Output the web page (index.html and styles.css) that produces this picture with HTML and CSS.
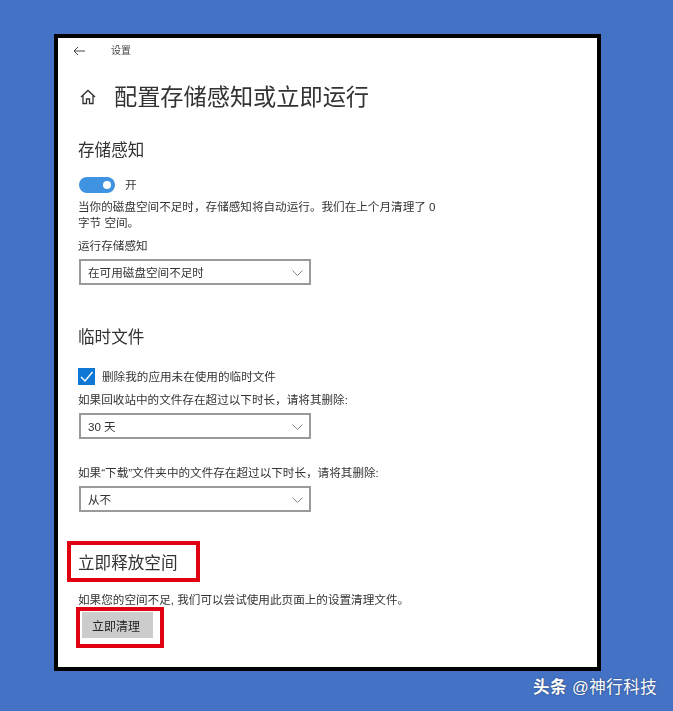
FILE: index.html
```html
<!DOCTYPE html>
<html lang="zh-CN">
<head>
  <meta charset="UTF-8" />
  <meta name="viewport" content="width=device-width, initial-scale=1.0"/>
  <title>设置</title>
  <link rel="stylesheet" href="styles.css">
</head>
<body>
  <div class="window">

    <!-- Title bar -->
    <div class="titlebar">
      <svg class="back" width="12" height="10" viewBox="0 0 12 10" fill="none" stroke="#444" stroke-width="1">
        <path d="M12 5H1M5 1L1 5l4 4"/>
      </svg>
      <span class="app-name">设置</span>
    </div>

    <div class="page-title">
      <svg class="home" width="16" height="16" viewBox="0 0 16 16" fill="none" stroke="#333" stroke-width="1.3">
        <path d="M1 8l7-6.5L15 8M3 6.5V14.5H6.5V10H9.5V14.5H13V6.5"/>
      </svg>
      <h1>配置存储感知或立即运行</h1>
    </div>

    <!-- Storage sense -->
    <h2 class="first">存储感知</h2>
    <div class="toggle-row">
      <span class="toggle"><span class="knob"></span></span>
      <span>开</span>
    </div>
    <p class="desc">当你的磁盘空间不足时，存储感知将自动运行。我们在上个月清理了 0<br>字节 空间。</p>
    <p class="field-label run-label">运行存储感知</p>
    <div class="select">
      <span>在可用磁盘空间不足时</span>
      <svg class="chevron" width="11" height="6" viewBox="0 0 11 6" fill="none" stroke="#888" stroke-width="1"><path d="M.5.5l5 5 5-5"/></svg>
    </div>

    <!-- Temp files -->
    <h2 class="temp">临时文件</h2>
    <div class="check-row">
      <span class="checkbox">
        <svg width="17" height="17" viewBox="0 0 17 17" fill="none" stroke="#fff" stroke-width="1.4"><path d="M3 9l4 4 7.5-9"/></svg>
      </span>
      <span>删除我的应用未在使用的临时文件</span>
    </div>
    <p class="field-label recycle-label">如果回收站中的文件存在超过以下时长，请将其删除:</p>
    <div class="select">
      <span>30 天</span>
      <svg class="chevron" width="11" height="6" viewBox="0 0 11 6" fill="none" stroke="#888" stroke-width="1"><path d="M.5.5l5 5 5-5"/></svg>
    </div>
    <p class="field-label download-label">如果“下载”文件夹中的文件存在超过以下时长，请将其删除:</p>
    <div class="select">
      <span>从不</span>
      <svg class="chevron" width="11" height="6" viewBox="0 0 11 6" fill="none" stroke="#888" stroke-width="1"><path d="M.5.5l5 5 5-5"/></svg>
    </div>

    <!-- Free up space -->
    <h2 class="free">立即释放空间<span class="mark mark-title"></span></h2>
    <p class="desc free-desc">如果您的空间不足, 我们可以尝试使用此页面上的设置清理文件。</p>
    <button class="clean">立即清理<span class="mark mark-button"></span></button>

  </div>

  <div class="watermark"><strong>头条</strong> @神行科技</div>
</body>
</html>
```

FILE: styles.css
```css
* {
  margin: 0;
  padding: 0;
  box-sizing: border-box;
  font-family: "Liberation Sans", "Noto Sans CJK SC", sans-serif;
}

body {
  background: #4472c4;
  height: 711px;
  overflow: hidden;
  color: #333;
  padding: 34px 0 0 54px;
}

.window {
  width: 547px;
  height: 637px;
  background: #fff;
  border: 4px solid #000;
  padding: 0 20px;
  font-size: 11.6px;
  line-height: 16px;
  filter: blur(0.35px);
}

.titlebar {
  display: flex;
  align-items: center;
  height: 26px;
  margin-left: -5px;
}

.back {
  margin-right: 26px;
}

.app-name {
  font-size: 10px;
  color: #444;
}

.page-title {
  display: flex;
  align-items: center;
  gap: 18px;
  margin-top: 14px;
  height: 38px;
}

.page-title .home {
  flex: none;
  margin-left: 2px;
}

h1 {
  font-size: 23.2px;
  font-weight: 400;
  line-height: 38px;
  white-space: nowrap;
}

h2 {
  font-size: 16.6px;
  font-weight: 400;
  line-height: 24px;
}

h2.first {
  margin-top: 23px;
}

.toggle-row {
  display: flex;
  align-items: center;
  gap: 10px;
  margin-top: 14px;
  height: 16px;
  margin-left: 1px;
}

.toggle {
  display: flex;
  align-items: center;
  justify-content: flex-end;
  width: 36px;
  height: 16px;
  border-radius: 8px;
  background: #3f93e0;
  padding-right: 4px;
}

.knob {
  width: 8px;
  height: 8px;
  border-radius: 50%;
  background: #fff;
}

.desc {
  white-space: nowrap;
}

.toggle-row + .desc {
  margin-top: 6px;
}

.field-label {
  padding-top: 1px;
  white-space: nowrap;
}

.run-label {
  margin-top: 6px;
}

.select {
  display: flex;
  align-items: center;
  justify-content: space-between;
  width: 232px;
  height: 26px;
  margin: 5px 0 0 1px;
  padding: 1px 6px 0 7px;
  border: 2px solid #9a9a9a;
  background: #fff;
}

h2.temp {
  margin-top: 41px;
}

.check-row {
  display: flex;
  align-items: center;
  gap: 7px;
  margin-top: 18px;
  height: 17px;
}

.checkbox {
  display: block;
  width: 17px;
  height: 17px;
  background: #0f78d4;
}

.checkbox svg {
  display: block;
}

.recycle-label {
  margin-top: 6px;
}

.download-label {
  margin-top: 25px;
}

h2.free {
  position: relative;
  margin-top: 39px;
  padding-top: 1px;
  width: fit-content;
}

.free-desc {
  margin-top: 16px;
}

.clean {
  position: relative;
  display: block;
  width: 71px;
  height: 26px;
  margin: 4px 0 0 4px;
  padding-right: 3px;
  border: none;
  background: #ccc;
  color: #222;
  font-size: 12px;
}

/* red highlight frames drawn over the screenshot */
.mark {
  position: absolute;
  border: 4px solid #e0000f;
}

.mark-title {
  top: -10px;
  left: -11px;
  width: 133px;
  height: 41px;
}

.mark-button {
  top: -5px;
  left: -6px;
  width: 88px;
  height: 41px;
}

.watermark {
  position: absolute;
  left: 533px;
  top: 677px;
  font-size: 16.5px;
  line-height: 20px;
  letter-spacing: 0.5px;
  color: #fff;
  text-shadow: 0 0 2px rgba(0, 0, 0, 0.45);
  white-space: nowrap;
}
```
